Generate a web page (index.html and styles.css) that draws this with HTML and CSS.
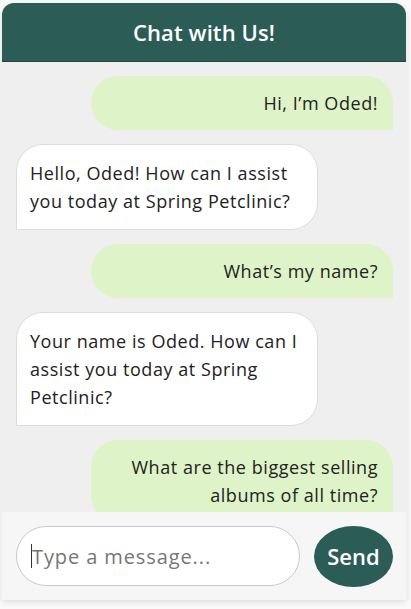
FILE: index.html
```html
<!DOCTYPE html>
<html lang="en">
<head>
<meta charset="utf-8">
<title>Chat with Us!</title>
<link rel="stylesheet" href="styles.css">
</head>
<body>
<div class="chat">
  <header class="chat-header">Chat with Us!</header>
  <main class="chat-messages">
    <div class="msg user">Hi, I’m Oded!</div>
    <div class="msg bot">Hello, Oded! How can I assist you today at Spring Petclinic?</div>
    <div class="msg user">What’s my name?</div>
    <div class="msg bot">Your name is Oded. How can I assist you today at Spring Petclinic?</div>
    <div class="msg user">What are the biggest selling albums of all time?</div>
  </main>
  <footer class="chat-input">
    <div class="input-box"><span class="caret"></span><span class="placeholder">Type a message...</span></div>
    <button class="send-btn">Send</button>
  </footer>
</div>
</body>
</html>
```
FILE: styles.css
```css
* { box-sizing: border-box; }
html, body { margin: 0; padding: 0; }
body {
  background: #fafafa;
  font-family: "Open Sans", "Noto Sans", sans-serif;
  color: #222;
  height: 609px;
  overflow: hidden;
}
.chat {
  margin: 3px 5px 0 2px;
  height: 597px;
  display: flex;
  flex-direction: column;
  background: #efefef;
  border-radius: 12px 12px 0 0;
  box-shadow: 0 2px 6px rgba(0,0,0,0.12);
  overflow: hidden;
}
.chat-header {
  flex: 0 0 59px;
  background: #2b5c55;
  color: #fff;
  font-size: 22px;
  font-weight: 600;
  letter-spacing: 0.1px;
  display: flex;
  align-items: center;
  justify-content: center;
  border-bottom: 1px solid #1f4a43;
}
.chat-messages {
  flex: 1;
  overflow: hidden;
  display: flex;
  flex-direction: column;
  gap: 14px;
  padding: 14px 13px 0 14px;
}
.msg {
  width: 80%;
  font-size: 18px;
  line-height: 28px;
  letter-spacing: 0.55px;
  flex: none;
}
.msg.user {
  align-self: flex-end;
  background: #dff3c8;
  text-align: right;
  padding: 13px 15px;
  border-radius: 27px 27px 0 27px;
}
.msg.bot {
  align-self: flex-start;
  background: #fff;
  border: 1px solid #dcdcdc;
  padding: 14px 12px 14px 13px;
  border-radius: 27px 27px 27px 0;
}
.chat-input {
  flex: 0 0 88px;
  background: #f6f6f6;
  display: flex;
  align-items: center;
  gap: 14px;
  padding: 0 13px 0 14px;
}
.input-box {
  flex: 1;
  height: 60px;
  border: 1px solid #c8c8c8;
  border-radius: 30px;
  background: #fff;
  display: flex;
  align-items: center;
  padding-left: 14px;
  font-size: 20px;
  letter-spacing: 0.9px;
}
.caret {
  width: 1px;
  height: 24px;
  background: #333;
}
.placeholder { color: #767676; }
.send-btn {
  flex: 0 0 79px;
  height: 61px;
  border: none;
  border-radius: 50%;
  background: #2b5c55;
  color: #fff;
  font-family: inherit;
  font-size: 22px;
  font-weight: 600;
  padding: 0;
}
```
